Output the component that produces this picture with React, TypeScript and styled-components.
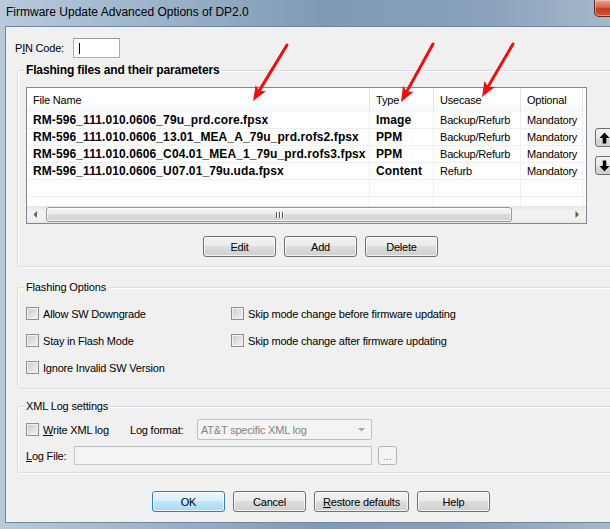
import React from "react";
import styled, { createGlobalStyle } from "styled-components";

const GlobalStyle = createGlobalStyle`
  html, body {
    margin: 0;
    padding: 0;
    overflow: hidden;
    background: #ffffff;
  }
  body {
    font-family: "Liberation Sans", Arial, sans-serif;
    font-size: 11px;
    color: #000;
  }
  * {
    box-sizing: border-box;
  }
`;

// ---------- window chrome ----------

const Viewport = styled.div`
  position: relative;
  width: 610px;
  height: 529px;
  overflow: hidden;
`;

const Window = styled.div`
  width: 642px;
  height: 529px;
  display: flex;
  flex-direction: column;
  background: linear-gradient(
    90deg,
    #b9cadb 0%,
    #a2b7cc 20%,
    #7f9ab6 50%,
    #89a1ba 75%,
    #aebfd0 100%
  );
`;

const TitleBar = styled.div`
  height: 26px;
  flex: none;
  display: flex;
  justify-content: space-between;
  align-items: flex-start;
  padding: 0 5px 0 6px;
`;

const Title = styled.div`
  font-size: 12px;
  line-height: 24px;
  color: #000;
`;

const CloseButton = styled.div`
  width: 43px;
  height: 17px;
  border: 1px solid #5d2b22;
  border-top: none;
  border-radius: 0 0 5px 5px;
  background: linear-gradient(#e8a493, #d6664c 45%, #c23a1f 55%, #d2583a);
  box-shadow: inset 0 0 0 1px rgba(255, 210, 200, 0.5);
`;

const Client = styled.div`
  flex: 1;
  margin: 0 5px 6px;
  background: #f0f0f0;
  border: 1px solid #6f87a1;
  padding: 11px 9px 0;
  display: flex;
  flex-direction: column;
`;

// ---------- basic controls ----------

const Label = styled.span<{ $w?: number }>`
  display: inline-block;
  flex: none;
  width: ${(p) => (p.$w ? `${p.$w}px` : "auto")};
  letter-spacing: -0.2px;
  white-space: nowrap;
`;

const Mnemonic = styled.u`
  text-underline-offset: 1px;
`;

const PinRow = styled.div`
  display: flex;
  align-items: center;
  height: 20px;
`;

const TextBox = styled.div<{ $w: number; $h: number; $disabled?: boolean }>`
  flex: none;
  width: ${(p) => p.$w}px;
  height: ${(p) => p.$h}px;
  border: 1px solid ${(p) => (p.$disabled ? "#c5c8cc" : "#abadb3")};
  border-top-color: ${(p) => (p.$disabled ? "#b9bcc0" : "#8e9aa8")};
  background: ${(p) => (p.$disabled ? "#f4f4f4" : "#ffffff")};
  display: flex;
  align-items: center;
`;

const Caret = styled.span`
  width: 1px;
  height: 11px;
  margin-left: 5px;
  background: #000;
`;

const Group = styled.fieldset<{ $top: number; $pad: string }>`
  margin: ${(p) => p.$top}px 0 0 2px;
  padding: ${(p) => p.$pad};
  border: 1px solid #d5dfe5;
  border-radius: 3px;
  box-shadow: inset 1px 1px 0 #ffffff, 1px 1px 0 #ffffff;
  min-width: 0;
`;

const Legend = styled.legend<{ $bold?: boolean }>`
  padding: 0 2px;
  margin-left: -2px;
  line-height: 13px;
  font-size: ${(p) => (p.$bold ? "12px" : "11px")};
  font-weight: ${(p) => (p.$bold ? 700 : 400)};
  letter-spacing: ${(p) => (p.$bold ? "-0.15px" : "-0.15px")};
`;

const PushButton = styled.button<{ $w: number; $primary?: boolean }>`
  flex: none;
  width: ${(p) => p.$w}px;
  height: 21px;
  padding: 0;
  font-family: inherit;
  font-size: 11px;
  letter-spacing: -0.2px;
  color: #000;
  border: 1px solid ${(p) => (p.$primary ? "#3c7fb1" : "#707070")};
  border-radius: 3px;
  background: ${(p) =>
    p.$primary
      ? "linear-gradient(#eaf6fd, #d9f0fc 50%, #bee6fd 50%, #a7d9f5)"
      : "linear-gradient(#f2f2f2, #ebebeb 50%, #dddddd 50%, #cfcfcf)"};
  box-shadow: inset 0 0 0 1px rgba(255, 255, 255, 0.75);
  display: flex;
  align-items: center;
  justify-content: center;
`;

const ButtonRow = styled.div<{ $left: number; $top: number }>`
  display: flex;
  gap: 8px;
  padding-left: ${(p) => p.$left}px;
  margin-top: ${(p) => p.$top}px;
`;

// ---------- list view ----------

const COLS = "343px 64px 87px 62px 1fr";

const ListArea = styled.div`
  display: flex;
  align-items: flex-start;
`;

const ListView = styled.div`
  flex: none;
  width: 561px;
  height: 137px;
  border: 1px solid #828790;
  background: #ffffff;
  display: flex;
  flex-direction: column;
  overflow: hidden;
`;

const HeaderRow = styled.div`
  display: grid;
  grid-template-columns: ${COLS};
  height: 24px;
  flex: none;
  background: linear-gradient(#ffffff, #ffffff 55%, #f6f7f9);
`;

const HeaderCell = styled.div`
  border-right: 1px solid #e3e4e6;
  padding-left: 6px;
  line-height: 24px;
  white-space: nowrap;
  overflow: hidden;
  letter-spacing: -0.2px;
`;

const Body = styled.div`
  height: 94px;
  flex: none;
  overflow: hidden;
`;

const DataRow = styled.div`
  display: grid;
  grid-template-columns: ${COLS};
  height: 17px;
  border-bottom: 1px solid #f0f0f0;
`;

const Cell = styled.div<{ $bold?: boolean }>`
  border-right: 1px solid #f0f0f0;
  padding-left: 6px;
  line-height: 17px;
  white-space: nowrap;
  overflow: hidden;
  font-size: ${(p) => (p.$bold ? "12px" : "11px")};
  font-weight: ${(p) => (p.$bold ? 700 : 400)};
  letter-spacing: ${(p) => (p.$bold ? "0.1px" : "-0.2px")};
`;

const ScrollBar = styled.div`
  height: 17px;
  flex: none;
  display: flex;
  background: linear-gradient(#e6e6e6, #f2f2f2 30%, #f2f2f2 70%, #e9e9e9);
`;

const ScrollArrow = styled.div`
  width: 17px;
  flex: none;
  display: flex;
  align-items: center;
  justify-content: center;
`;

const Track = styled.div`
  flex: 1;
  display: flex;
  align-items: center;
`;

const Thumb = styled.div`
  width: 466px;
  height: 15px;
  margin-left: 2px;
  border: 1px solid #979797;
  border-radius: 3px;
  background: linear-gradient(#f4f4f4, #ebebeb 50%, #dbdbdb 50%, #d3d3d3);
  box-shadow: inset 0 0 0 1px rgba(255, 255, 255, 0.7);
  display: flex;
  align-items: center;
  justify-content: center;
  gap: 2px;
`;

const Grip = styled.span`
  width: 1px;
  height: 6px;
  background: #5a5a5a;
  box-shadow: 1px 0 0 #ffffff;
`;

const SideButtons = styled.div`
  display: flex;
  flex-direction: column;
  gap: 9px;
  margin: 41px 0 0 8px;
`;

const SmallButton = styled.div`
  width: 18px;
  height: 19px;
  border: 1px solid #707070;
  border-radius: 3px;
  background: linear-gradient(#f2f2f2, #ebebeb 50%, #dddddd 50%, #cfcfcf);
  display: flex;
  align-items: center;
  justify-content: center;
`;

// ---------- options ----------

const OptionGrid = styled.div`
  display: grid;
  grid-template-columns: 205px auto;
  grid-auto-rows: 27px;
  align-items: center;
`;

const CheckItem = styled.label<{ $w?: number }>`
  display: flex;
  align-items: center;
  gap: 4px;
  flex: none;
  width: ${(p) => (p.$w ? `${p.$w}px` : "auto")};
  white-space: nowrap;
  letter-spacing: -0.2px;
`;

const CheckBox = styled.span`
  width: 13px;
  height: 13px;
  flex: none;
  border: 1px solid #8e8f8f;
  background: linear-gradient(135deg, #cbcbcb, #f4f4f4);
  box-shadow: inset 0 0 0 1px #f2f2f2;
`;

const FormRow = styled.div<{ $h: number; $top?: number }>`
  display: flex;
  align-items: center;
  height: ${(p) => p.$h}px;
  margin-top: ${(p) => p.$top || 0}px;
`;

const ComboBox = styled.div`
  flex: none;
  width: 175px;
  height: 21px;
  border: 1px solid #bcbfc3;
  border-radius: 2px;
  background: #f4f4f4;
  color: #838383;
  display: flex;
  align-items: center;
  justify-content: space-between;
  padding: 0 6px 0 3px;
  letter-spacing: -0.2px;
`;

const BrowseButton = styled.div`
  width: 19px;
  height: 19px;
  margin-left: 6px;
  border: 1px solid #b5b5b5;
  border-radius: 3px;
  background: #f4f4f4;
  color: #8a8a8a;
  display: flex;
  align-items: flex-end;
  justify-content: center;
  line-height: 14px;
  font-size: 10px;
`;

const Overlay = styled.svg`
  position: absolute;
  left: 0;
  top: 0;
  width: 610px;
  height: 529px;
  pointer-events: none;
`;

// ---------- data ----------

const rows = [
  ["RM-596_111.010.0606_79u_prd.core.fpsx", "Image", "Backup/Refurb", "Mandatory"],
  ["RM-596_111.010.0606_13.01_MEA_A_79u_prd.rofs2.fpsx", "PPM", "Backup/Refurb", "Mandatory"],
  ["RM-596_111.010.0606_C04.01_MEA_1_79u_prd.rofs3.fpsx", "PPM", "Backup/Refurb", "Mandatory"],
  ["RM-596_111.010.0606_U07.01_79u.uda.fpsx", "Content", "Refurb", "Mandatory"],
  ["", "", "", ""],
  ["", "", "", ""],
];

const arrows = [
  { x1: 287, y1: 45, x2: 253, y2: 101 },
  { x1: 433, y1: 44, x2: 401, y2: 102 },
  { x1: 513, y1: 44, x2: 482, y2: 97 },
];

const RedArrow: React.FC<{ x1: number; y1: number; x2: number; y2: number }> = ({ x1, y1, x2, y2 }) => {
  const len = Math.hypot(x2 - x1, y2 - y1);
  const ux = (x2 - x1) / len;
  const uy = (y2 - y1) / len;
  const bx = x2 - ux * 15;
  const by = y2 - uy * 15;
  const pts = [
    `${x2},${y2}`,
    `${bx - uy * 6},${by + ux * 6}`,
    `${bx + ux * 3},${by + uy * 3}`,
    `${bx + uy * 6},${by - ux * 6}`,
  ].join(" ");
  return (
    <g>
      <line x1={x1} y1={y1} x2={bx + ux * 4} y2={by + uy * 4} stroke="#f20d0d" strokeWidth={3} strokeLinecap="round" />
      <polygon points={pts} fill="#f20d0d" />
    </g>
  );
};

const Triangle: React.FC<{ dir: "left" | "right" | "down"; color?: string }> = ({ dir, color = "#5f5f5f" }) => {
  const d = dir === "left" ? "M4 0 L4 7 L0.5 3.5 Z" : dir === "right" ? "M0.5 0 L0.5 7 L4 3.5 Z" : "M0 0 L7 0 L3.5 3.5 Z";
  const w = dir === "down" ? 7 : 5;
  const h = dir === "down" ? 4 : 7;
  return (
    <svg width={w} height={h} viewBox={`0 0 ${w} ${h}`}>
      <path d={d} fill={color} />
    </svg>
  );
};

const BoldArrow: React.FC<{ up?: boolean }> = ({ up }) => (
  <svg width="11" height="12" viewBox="0 0 11 12" style={{ transform: up ? undefined : "rotate(180deg)" }}>
    <path d="M5.5 0.5 L10.5 6 H7.3 V11.5 H3.7 V6 H0.5 Z" fill="#000" />
  </svg>
);

export default function App() {
  return (
    <>
      <GlobalStyle />
      <Viewport>
        <Window>
          <TitleBar>
            <Title>Firmware Update Advanced Options of DP2.0</Title>
            <CloseButton />
          </TitleBar>
          <Client>
            <PinRow>
              <Label $w={58}>
                P<Mnemonic>I</Mnemonic>N Code:
              </Label>
              <TextBox $w={47} $h={20}>
                <Caret />
              </TextBox>
            </PinRow>

            <Group $top={6} $pad="10px 8px 9px">
              <Legend $bold>Flashing files and their parameters</Legend>
              <ListArea>
                <ListView>
                  <HeaderRow>
                    <HeaderCell>File Name</HeaderCell>
                    <HeaderCell>Type</HeaderCell>
                    <HeaderCell>Usecase</HeaderCell>
                    <HeaderCell>Optional</HeaderCell>
                    <HeaderCell />
                  </HeaderRow>
                  <Body>
                    {rows.map((r, i) => (
                      <DataRow key={i}>
                        <Cell $bold>{r[0]}</Cell>
                        <Cell $bold>{r[1]}</Cell>
                        <Cell>{r[2]}</Cell>
                        <Cell>{r[3]}</Cell>
                        <Cell />
                      </DataRow>
                    ))}
                  </Body>
                  <ScrollBar>
                    <ScrollArrow>
                      <Triangle dir="left" />
                    </ScrollArrow>
                    <Track>
                      <Thumb>
                        <Grip />
                        <Grip />
                        <Grip />
                      </Thumb>
                    </Track>
                    <ScrollArrow>
                      <Triangle dir="right" />
                    </ScrollArrow>
                  </ScrollBar>
                </ListView>
                <SideButtons>
                  <SmallButton>
                    <BoldArrow up />
                  </SmallButton>
                  <SmallButton>
                    <BoldArrow />
                  </SmallButton>
                </SideButtons>
              </ListArea>
              <ButtonRow $left={177} $top={12}>
                <PushButton $w={73}>Edit</PushButton>
                <PushButton $w={73}>Add</PushButton>
                <PushButton $w={73}>Delete</PushButton>
              </ButtonRow>
            </Group>

            <Group $top={14} $pad="6px 8px 7px">
              <Legend>Flashing Options</Legend>
              <OptionGrid>
                <CheckItem>
                  <CheckBox />
                  Allow SW Downgrade
                </CheckItem>
                <CheckItem>
                  <CheckBox />
                  Skip mode change before firmware updating
                </CheckItem>
                <CheckItem>
                  <CheckBox />
                  Stay in Flash Mode
                </CheckItem>
                <CheckItem>
                  <CheckBox />
                  Skip mode change after firmware updating
                </CheckItem>
                <CheckItem>
                  <CheckBox />
                  Ignore Invalid SW Version
                </CheckItem>
              </OptionGrid>
            </Group>

            <Group $top={11} $pad="6px 8px 7px">
              <Legend>XML Log settings</Legend>
              <FormRow $h={21}>
                <CheckItem $w={104}>
                  <CheckBox />
                  <span>
                    <Mnemonic>W</Mnemonic>rite XML log
                  </span>
                </CheckItem>
                <Label $w={67}>Log format:</Label>
                <ComboBox>
                  <span>AT&amp;T specific XML log</span>
                  <Triangle dir="down" color="#a5a5a5" />
                </ComboBox>
              </FormRow>
              <FormRow $h={19} $top={6}>
                <Label $w={48}>
                  <Mnemonic>L</Mnemonic>og File:
                </Label>
                <TextBox $w={298} $h={19} $disabled />
                <BrowseButton>...</BrowseButton>
              </FormRow>
            </Group>

            <ButtonRow $left={137} $top={18}>
              <PushButton $w={73} $primary>
                OK
              </PushButton>
              <PushButton $w={73}>Cancel</PushButton>
              <PushButton $w={95}>
                <span>
                  <Mnemonic>R</Mnemonic>estore defaults
                </span>
              </PushButton>
              <PushButton $w={73}>Help</PushButton>
            </ButtonRow>
          </Client>
        </Window>

        <Overlay viewBox="0 0 610 529">
          {arrows.map((a, i) => (
            <RedArrow key={i} {...a} />
          ))}
        </Overlay>
      </Viewport>
    </>
  );
}
